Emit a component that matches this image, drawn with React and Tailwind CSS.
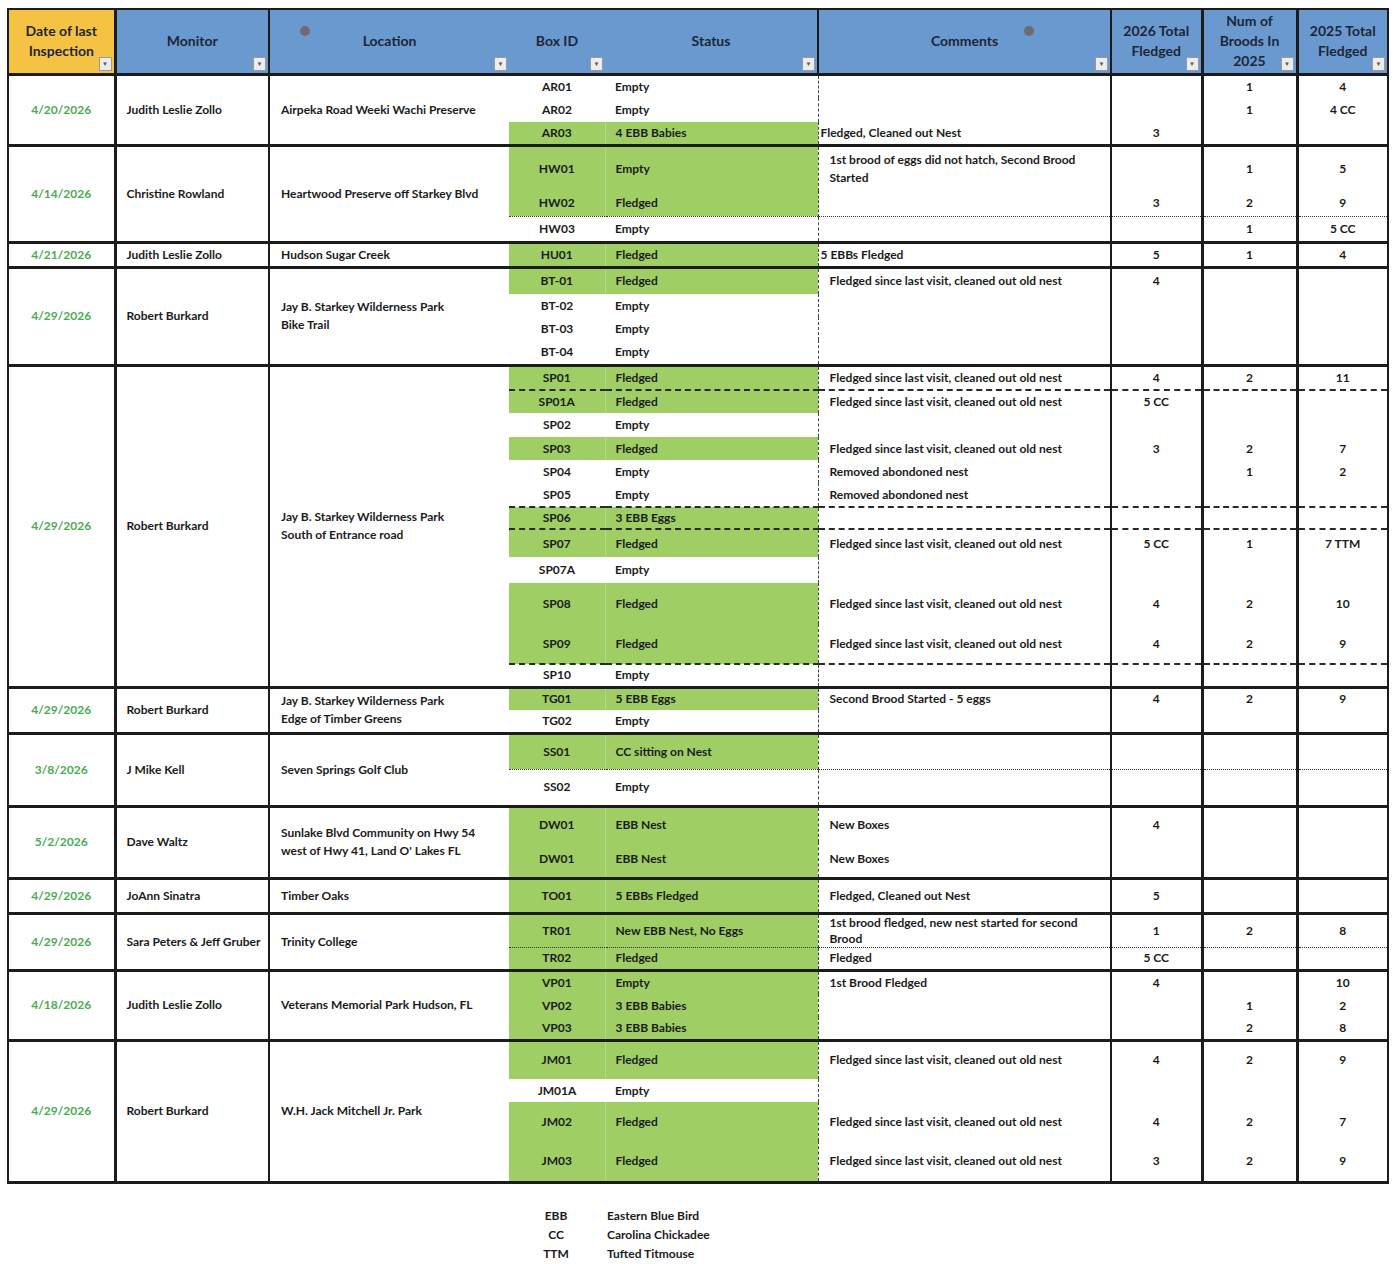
const F = 'Fledged since last visit, cleaned out old nest';

const groups = [
  { date: '4/20/2026', monitor: 'Judith Leslie Zollo', loc: ['Airpeka Road Weeki Wachi Preserve'], rows: [
    { id: 'AR01', st: 'Empty', h: 24, b25: '1', t25: '4' },
    { id: 'AR02', st: 'Empty', h: 24, b25: '1', t25: '4 CC' },
    { id: 'AR03', st: '4 EBB Babies', g: 1, h: 23, c: 'Fledged, Cleaned out Nest', np: 1, t26: '3' },
  ]},
  { date: '4/14/2026', monitor: 'Christine Rowland', loc: ['Heartwood Preserve off Starkey Blvd'], rows: [
    { id: 'HW01', st: 'Empty', g: 1, h: 46, c: ['1st brood of eggs did not hatch, Second Brood', 'Started'], b25: '1', t25: '5' },
    { id: 'HW02', st: 'Fledged', g: 1, h: 25, t26: '3', b25: '2', t25: '9', sep: 'dotted' },
    { id: 'HW03', st: 'Empty', h: 26, b25: '1', t25: '5 CC' },
  ]},
  { date: '4/21/2026', monitor: 'Judith Leslie Zollo', loc: ['Hudson Sugar Creek'], rows: [
    { id: 'HU01', st: 'Fledged', g: 1, h: 25, c: '5 EBBs Fledged', np: 1, t26: '5', b25: '1', t25: '4' },
  ]},
  { date: '4/29/2026', monitor: 'Robert Burkard', loc: ['Jay B. Starkey Wilderness Park', 'Bike Trail'], rows: [
    { id: 'BT-01', st: 'Fledged', g: 1, h: 27, c: F, t26: '4' },
    { id: 'BT-02', st: 'Empty', h: 23 },
    { id: 'BT-03', st: 'Empty', h: 23 },
    { id: 'BT-04', st: 'Empty', h: 25 },
  ]},
  { date: '4/29/2026', monitor: 'Robert Burkard', loc: ['Jay B. Starkey Wilderness Park', 'South of Entrance road'], rows: [
    { id: 'SP01', st: 'Fledged', g: 1, h: 25, c: F, t26: '4', b25: '2', t25: '11', sep: 'dashed' },
    { id: 'SP01A', st: 'Fledged', g: 1, h: 23, c: F, t26: '5 CC' },
    { id: 'SP02', st: 'Empty', h: 24 },
    { id: 'SP03', st: 'Fledged', g: 1, h: 23, c: F, t26: '3', b25: '2', t25: '7' },
    { id: 'SP04', st: 'Empty', h: 23, c: 'Removed abondoned nest', b25: '1', t25: '2' },
    { id: 'SP05', st: 'Empty', h: 24, c: 'Removed abondoned nest', sep: 'dashed' },
    { id: 'SP06', st: '3 EBB Eggs', g: 1, h: 22, sep: 'dashed' },
    { id: 'SP07', st: 'Fledged', g: 1, h: 28, c: F, t26: '5 CC', b25: '1', t25: '7 TTM' },
    { id: 'SP07A', st: 'Empty', h: 26 },
    { id: 'SP08', st: 'Fledged', g: 1, h: 41, c: F, t26: '4', b25: '2', t25: '10' },
    { id: 'SP09', st: 'Fledged', g: 1, h: 40, c: F, t26: '4', b25: '2', t25: '9', sep: 'dashed' },
    { id: 'SP10', st: 'Empty', h: 23 },
  ]},
  { date: '4/29/2026', monitor: 'Robert Burkard', loc: ['Jay B. Starkey Wilderness Park', 'Edge of Timber Greens'], rows: [
    { id: 'TG01', st: '5 EBB Eggs', g: 1, h: 23, c: 'Second Brood Started - 5 eggs', t26: '4', b25: '2', t25: '9' },
    { id: 'TG02', st: 'Empty', h: 23 },
  ]},
  { date: '3/8/2026', monitor: 'J Mike Kell', loc: ['Seven Springs Golf Club'], rows: [
    { id: 'SS01', st: 'CC sitting on Nest', g: 1, h: 36, sep: 'dotted' },
    { id: 'SS02', st: 'Empty', h: 37 },
  ]},
  { date: '5/2/2026', monitor: 'Dave Waltz', loc: ['Sunlake Blvd Community on Hwy 54', "west of Hwy 41, Land O' Lakes FL"], rows: [
    { id: 'DW01', st: 'EBB Nest', g: 1, h: 36, c: 'New Boxes', t26: '4' },
    { id: 'DW01', st: 'EBB Nest', g: 1, h: 36, c: 'New Boxes' },
  ]},
  { date: '4/29/2026', monitor: 'JoAnn Sinatra', loc: ['Timber Oaks'], rows: [
    { id: 'TO01', st: '5 EBBs Fledged', g: 1, h: 35, c: 'Fledged, Cleaned out Nest', t26: '5' },
  ]},
  { date: '4/29/2026', monitor: 'Sara Peters & Jeff Gruber', loc: ['Trinity College'], rows: [
    { id: 'TR01', st: 'New EBB Nest, No Eggs', g: 1, h: 33, tight: 1, c: ['1st brood fledged, new nest started for second', 'Brood'], t26: '1', b25: '2', t25: '8', sep: 'dotted' },
    { id: 'TR02', st: 'Fledged', g: 1, h: 23, c: 'Fledged', t26: '5 CC' },
  ]},
  { date: '4/18/2026', monitor: 'Judith Leslie Zollo', loc: ['Veterans Memorial Park Hudson, FL'], rows: [
    { id: 'VP01', st: 'Empty', g: 1, h: 24, c: '1st Brood Fledged', t26: '4', t25: '10' },
    { id: 'VP02', st: '3 EBB Babies', g: 1, h: 23, b25: '1', t25: '2' },
    { id: 'VP03', st: '3 EBB Babies', g: 1, h: 23, b25: '2', t25: '8' },
  ]},
  { date: '4/29/2026', monitor: 'Robert Burkard', loc: ['W.H. Jack Mitchell Jr. Park'], rows: [
    { id: 'JM01', st: 'Fledged', g: 1, h: 39, c: F, t26: '4', b25: '2', t25: '9' },
    { id: 'JM01A', st: 'Empty', h: 23 },
    { id: 'JM02', st: 'Fledged', g: 1, h: 39, c: F, t26: '4', b25: '2', t25: '7' },
    { id: 'JM03', st: 'Fledged', g: 1, h: 41, c: F, t26: '3', b25: '2', t25: '9' },
  ]},
];

const TOP = '[border-top:3px_solid_#1c1c1c]';
const BOT_LAST = '[border-bottom:3px_solid_#1c1c1c]';
const SEP_DASH = '[border-bottom:2px_dashed_#2a2a2a]';
const SEP_DOT = '[border-bottom:1px_dotted_#333]';
const GREEN = 'bg-[#9fce65]';

function Filter() {
  return (
    <span className="absolute right-[2px] bottom-[2px] flex h-[14px] w-[13px] items-center justify-center border border-[#9a9a9a] bg-[#ececec] text-[6px] leading-none text-[#555]">
      ▼
    </span>
  );
}

function Lines({ v, tight }) {
  if (!v) return null;
  if (Array.isArray(v)) {
    return (
      <div className={tight ? 'leading-[16px]' : 'leading-[18px]'}>
        {v.map((l, i) => (
          <div key={i} className="whitespace-nowrap">{l}</div>
        ))}
      </div>
    );
  }
  return <span className="whitespace-nowrap">{v}</span>;
}

function Row({ g, r, i, last }) {
  const first = i === 0;
  const lastRow = last && i === g.rows.length - 1;
  const top = first ? TOP : '';
  const bot = lastRow ? BOT_LAST : r.sep === 'dashed' ? SEP_DASH : r.sep === 'dotted' ? SEP_DOT : '';
  const span = g.rows.length;
  return (
    <tr style={{ height: r.h }}>
      {first && (
        <>
          <td rowSpan={span} className={`${TOP} ${last ? BOT_LAST : ''} [border-left:2px_solid_#1c1c1c] [border-right:3px_solid_#1c1c1c] p-0 text-center text-[#4aac50]`}>
            {g.date}
          </td>
          <td rowSpan={span} className={`${TOP} ${last ? BOT_LAST : ''} [border-right:2px_solid_#1c1c1c] p-0 pl-[10px] whitespace-nowrap`}>
            {g.monitor}
          </td>
          <td rowSpan={span} className={`${TOP} ${last ? BOT_LAST : ''} p-0 pl-[11px] leading-[18px]`}>
            {g.loc.map((l, k) => (
              <div key={k} className="whitespace-nowrap">{l}</div>
            ))}
          </td>
        </>
      )}
      <td className={`${top} ${bot} ${r.g ? `${GREEN} [border-right:1px_solid_#b6da8e]` : ''} p-0 text-center leading-[16px]`}>{r.id}</td>
      <td className={`${top} ${bot} ${r.g ? GREEN : ''} p-0 pl-[10px] whitespace-nowrap leading-[16px]`}>{r.st}</td>
      <td className={`${top} ${bot} [border-left:1px_dashed_#444] [border-right:2px_solid_#1c1c1c] p-0 leading-[16px] ${r.np ? 'pl-[2px]' : 'pl-[11px]'}`}>
        <Lines v={r.c} tight={r.tight} />
      </td>
      <td className={`${top} ${bot} [border-right:3px_solid_#1c1c1c] p-0 text-center leading-[16px]`}>{r.t26}</td>
      <td className={`${top} ${bot} [border-right:3px_solid_#1c1c1c] p-0 text-center leading-[16px]`}>{r.b25}</td>
      <td className={`${top} ${bot} [border-right:2px_solid_#1c1c1c] p-0 text-center leading-[16px]`}>{r.t25}</td>
    </tr>
  );
}

const legend = [
  ['EBB', 'Eastern Blue Bird'],
  ['CC', 'Carolina Chickadee'],
  ['TTM', 'Tufted Titmouse'],
];

export default function App() {
  const HB = '[border-top:2px_solid_#1c1c1c] [border-bottom:2px_solid_#1c1c1c]';
  return (
    <div className="min-h-[1264px] w-[1400px] overflow-hidden bg-white pl-[7px] pt-[8px] font-[Lato,sans-serif] text-[12px] font-bold text-[#1b1b1b]">
      <table className="w-[1380px] table-fixed border-collapse">
        <colgroup>
          <col className="w-[107px]" />
          <col className="w-[154px]" />
          <col className="w-[240px]" />
          <col className="w-[96px]" />
          <col className="w-[213px]" />
          <col className="w-[293px]" />
          <col className="w-[91px]" />
          <col className="w-[95px]" />
          <col className="w-[91px]" />
        </colgroup>
        <thead>
          <tr className="h-[65px] text-[14px] font-bold leading-[20px] text-[#1d2636]">
            <th className={`relative ${HB} [border-left:2px_solid_#1c1c1c] [border-right:3px_solid_#1c1c1c] bg-[#f6c244] p-0 font-bold`}>
              Date of last<br />Inspection
              <Filter />
            </th>
            <th className={`relative ${HB} [border-right:2px_solid_#1c1c1c] bg-[#6a99d0] p-0 font-bold`}>
              Monitor
              <Filter />
            </th>
            <th className={`relative ${HB} bg-[#6a99d0] p-0 font-bold`}>
              Location
              <span className="absolute left-[30px] top-[16px] h-[10px] w-[10px] rounded-full bg-[#6c6c6c]" />
              <Filter />
            </th>
            <th className={`relative ${HB} bg-[#6a99d0] p-0 font-bold`}>
              Box ID
              <Filter />
            </th>
            <th className={`relative ${HB} [border-right:2px_solid_#1c1c1c] bg-[#6a99d0] p-0 font-bold`}>
              Status
              <Filter />
            </th>
            <th className={`relative ${HB} [border-right:2px_solid_#1c1c1c] bg-[#6a99d0] p-0 font-bold`}>
              Comments
              <span className="absolute left-[205px] top-[16px] h-[10px] w-[10px] rounded-full bg-[#6c6c6c]" />
              <Filter />
            </th>
            <th className={`relative ${HB} [border-right:3px_solid_#1c1c1c] bg-[#6a99d0] p-0 font-bold`}>
              2026 Total<br />Fledged
              <Filter />
            </th>
            <th className={`relative ${HB} [border-right:3px_solid_#1c1c1c] bg-[#6a99d0] p-0 font-bold`}>
              Num of<br />Broods In<br />2025
              <Filter />
            </th>
            <th className={`relative ${HB} [border-right:2px_solid_#1c1c1c] bg-[#6a99d0] p-0 font-bold`}>
              2025 Total<br />Fledged
              <Filter />
            </th>
          </tr>
        </thead>
        {groups.map((g, gi) => (
          <tbody key={gi}>
            {g.rows.map((r, i) => (
              <Row key={i} g={g} r={r} i={i} last={gi === groups.length - 1} />
            ))}
          </tbody>
        ))}
      </table>

      <div className="ml-[501px] mt-[23px] flex flex-col">
        {legend.map(([a, b]) => (
          <div key={a} className="flex h-[19px] items-center">
            <div className="w-[96px] text-center">{a}</div>
            <div className="pl-[3px]">{b}</div>
          </div>
        ))}
        <div className="h-[6px] w-[96px] bg-[#e2efd4]" />
      </div>
    </div>
  );
}
